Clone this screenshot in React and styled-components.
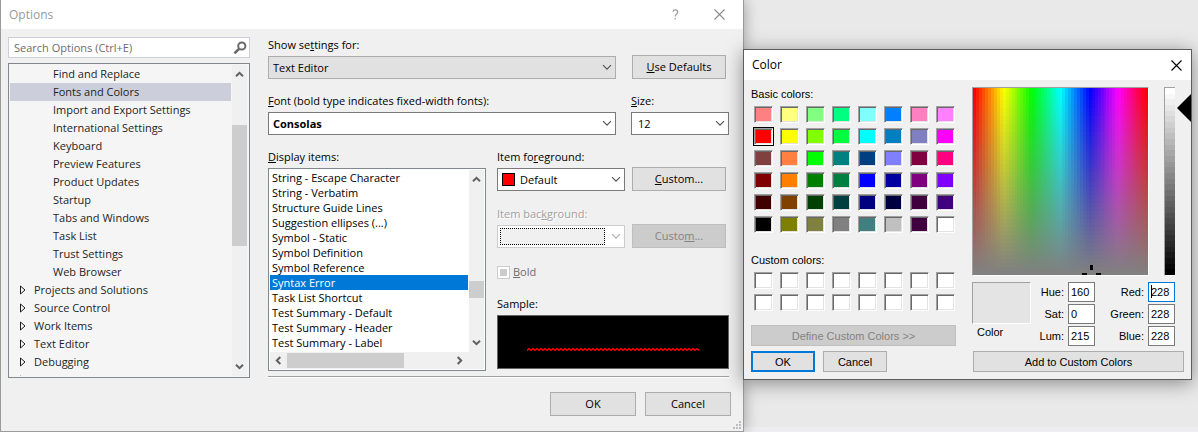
import React from "react";
import styled, { createGlobalStyle, css } from "styled-components";

const GlobalStyle = createGlobalStyle`
  *, *::before, *::after { box-sizing: border-box; }
  body { margin: 0; background: #e9e9e9; }
  button, input, select { font: inherit; color: inherit; margin: 0; }
  ul { list-style: none; margin: 0; padding: 0; }
`;

const UI_FONT = `"Open Sans", "Noto Sans", sans-serif`;
const CLASSIC_FONT = `"Liberation Sans", sans-serif`;

/* ---------- windows ---------- */

const Desktop = styled.div`
  min-height: 100vh;
  display: grid;
  grid-template-columns: 744fr 448fr;
  align-items: start;
  padding-right: 6px;
  background: linear-gradient(to top, #eeeef0 5px, #e9e9e9 5px);
  overflow: hidden;
`;

const OptionsWindow = styled.section`
  display: flex;
  flex-direction: column;
  min-height: 100vh;
  border: 1px solid #9b9b9b;
  border-top: 0;
  background: #f0f0f0;
  color: #000;
  font: 11px/16px ${UI_FONT};
  box-shadow: 0 0 14px rgba(0, 0, 0, 0.35);
`;

const ColorWindow = styled.section`
  z-index: 1;
  margin-top: 49px;
  margin-left: -1px;
  border: 1px solid #5c5c5c;
  background: #f0f0f0;
  color: #000;
  font: 11px/16px ${CLASSIC_FONT};
  box-shadow: 0 3px 18px rgba(0, 0, 0, 0.42);
`;

const TitleBar = styled.header`
  display: flex;
  align-items: center;
  height: ${(p) => (p.$active ? 30 : 29)}px;
  padding: 0 ${(p) => (p.$active ? 8 : 17)}px 0 8px;
  background: #fff;
  color: ${(p) => (p.$active ? "#000" : "#999")};
  font: 12px/16px ${UI_FONT};
`;

const Title = styled.h1`
  flex: 1;
  margin: 0;
  font: inherit;
`;

const CaptionButton = styled.button`
  display: grid;
  place-items: center;
  width: 13px;
  height: 26px;
  margin-left: 31px;
  padding: 0;
  border: 0;
  background: none;
`;

/* ---------- shared controls ---------- */

const PushButton = styled.button`
  height: ${(p) => (p.$small ? 21 : 24)}px;
  width: ${(p) => p.$width || "100%"};
  padding: 0;
  border: ${(p) => (p.$primary ? "2px solid #0078d7" : "1px solid #adadad")};
  background: #e1e1e1;
  line-height: 16px;
  &:disabled {
    border-color: #bfbfbf;
    background: #cccccc;
    color: #838383;
  }
`;

const Field = styled.div`
  display: flex;
  flex-direction: column;
  gap: 3px;
  flex: ${(p) => p.$flex || "1 1 0"};
  min-width: 0;
`;

const Label = styled.label`
  white-space: nowrap;
  ${(p) =>
    p.$disabled &&
    css`
      color: #a0a0a0;
      text-shadow: 1px 1px 0 #fff;
    `}
`;

const ComboBox = styled.div`
  display: grid;
  align-items: center;
  height: 23px;
  border: 1px solid ${(p) => (p.$disabled ? "#cccccc" : p.$flat ? "#adadad" : "#7a7a7a")};
  background: ${(p) => (p.$flat ? "#e1e1e1" : "#fff")};
  > * { grid-area: 1 / 1; }
  > svg {
    justify-self: end;
    margin-right: 3px;
    pointer-events: none;
  }
`;

const Select = styled.select`
  appearance: none;
  width: 100%;
  height: 21px;
  padding: 0 20px 0 ${(p) => p.$indent || 4}px;
  border: 0;
  background: none;
  font-weight: ${(p) => (p.$bold ? 700 : 400)};
  opacity: 1;
`;

const ColorChip = styled.span`
  width: 13px;
  height: 13px;
  margin-left: 4px;
  border: 1px solid #000;
  background: #f00;
  pointer-events: none;
`;

const FocusRect = styled.span`
  height: 17px;
  margin: 0 19px 0 2px;
  border: 1px dotted #000;
  background: #f0f0f0;
  pointer-events: none;
`;

/* ---------- scroll bars ---------- */

const ScrollBar = styled.div`
  display: flex;
  flex-direction: ${(p) => (p.$horizontal ? "row" : "column")};
  align-items: center;
  justify-content: space-between;
  background: #f0f0f0;
  ${(p) => (p.$horizontal ? "height: 17px; padding: 0 4px;" : "width: 15px; padding: 5px 0;")}
`;

const ScrollTrack = styled.div`
  flex: 1;
  display: flex;
  flex-direction: ${(p) => (p.$horizontal ? "row" : "column")};
  align-self: stretch;
  margin: ${(p) => (p.$horizontal ? "1px 4px" : "5px 0")};
`;

const ScrollThumb = styled.div`
  background: #cdcdcd;
  flex: ${(p) => p.$size} 0 0;
`;

const ScrollSpace = styled.div`
  flex: ${(p) => p.$size} 0 0;
`;

/* ---------- options: sidebar ---------- */

const OptionsBody = styled.div`
  display: flex;
  flex: 1 0 auto;
  gap: 18px;
  padding: 8px 14px 0 7px;
`;

const Sidebar = styled.aside`
  display: flex;
  flex-direction: column;
  flex: 242 1 0;
  gap: 5px;
  min-width: 0;
`;

const SearchBox = styled.div`
  display: flex;
  align-items: center;
  height: 21px;
  padding: 0 2px 0 5px;
  border: 1px solid #cccedb;
  background: #fff;
`;

const SearchInput = styled.input`
  flex: 1;
  min-width: 0;
  height: 19px;
  padding: 0;
  border: 0;
  outline: 0;
  background: none;
  &::placeholder { color: #6d6d6d; opacity: 1; }
`;

const TreePane = styled.div`
  display: flex;
  flex: 1 1 0;
  gap: 1px;
  min-height: 0;
  padding: 1px 2px 1px 1px;
  border: 1px solid #828790;
  background: #f5f5f5;
  overflow: hidden;
`;

const Tree = styled.ul`
  flex: 1;
  min-width: 0;
  overflow: hidden;
`;

const TreeItem = styled.li`
  display: flex;
  align-items: center;
  gap: 8px;
  height: 18px;
  padding-left: ${(p) => (p.$leaf ? 43 : 10)}px;
  background: ${(p) => (p.$selected ? "#cccedb" : "transparent")};
  color: #1e1e1e;
  white-space: nowrap;
`;

/* ---------- options: settings ---------- */

const Settings = styled.div`
  display: flex;
  flex-direction: column;
  flex: 461 1 0;
  gap: 14px;
  min-width: 0;
`;

const SettingsRow = styled.div`
  display: flex;
  align-items: ${(p) => (p.$stretch ? "stretch" : "flex-end")};
  gap: ${(p) => p.$gap}px;
`;

const ActionSlot = styled.div`
  flex: 0 0 98px;
  padding: 0 3px 0 1px;
`;

const ItemColumn = styled.div`
  display: flex;
  flex-direction: column;
  flex: 232 1 0;
  gap: 15px;
  min-width: 0;
`;

const ListBox = styled.div`
  display: grid;
  grid-template-columns: 1fr 15px;
  grid-template-rows: 182px 17px;
  column-gap: 1px;
  padding: 1px;
  border: 1px solid #828790;
  background: #fff;
  > :last-child { grid-column: 1 / -1; padding-right: 20px; }
`;

const ListItem = styled.li`
  height: 15px;
  padding-left: 2px;
  line-height: 15px;
  white-space: nowrap;
  background: ${(p) => (p.$selected ? "#0078d7" : "transparent")};
  color: ${(p) => (p.$selected ? "#fff" : "#000")};
`;

const CheckRow = styled.label`
  display: flex;
  align-items: center;
  gap: 3px;
  height: 18px;
  color: #6d6d6d;
`;

const CheckBox = styled.input`
  appearance: none;
  width: 13px;
  height: 13px;
  border: 1px solid #cccccc;
  background: #cccccc;
  box-shadow: inset 0 0 0 2px #fff;
`;

const SampleBox = styled.div`
  display: flex;
  justify-content: center;
  height: 54px;
  padding-top: 32px;
  border: 1px solid #646464;
  background: #000;
`;

const Divider = styled.hr`
  width: 100%;
  height: 2px;
  margin: -9px 0 0;
  border: 0;
  border-top: 1px solid #a0a0a0;
  background: #fff;
`;

const OptionsFooter = styled.footer`
  display: flex;
  justify-content: flex-end;
  gap: 9px;
  padding: 14px 12px 0 0;
`;

const ResizeGrip = styled.svg`
  align-self: flex-end;
  margin: 5px 2px 2px 0;
`;

/* ---------- color dialog ---------- */

const ColorBody = styled.div`
  display: flex;
  gap: 16px;
  padding: 0 0 7px 7px;
`;

const Palette = styled.div`
  flex: 0 0 205px;
  padding-top: 6px;
`;

const PaletteTitle = styled.h2`
  margin: 0;
  font: inherit;
`;

const SwatchGrid = styled.div`
  display: grid;
  grid-template-columns: repeat(8, 19px);
  gap: 5px 7px;
  margin: 4px 0 ${(p) => p.$after}px 3px;
`;

const Swatch = styled.button`
  height: 17px;
  padding: 0;
  border: 1px solid;
  border-color: #a0a0a0 #fff #fff #a0a0a0;
  outline: ${(p) => (p.$selected ? "1px solid #000" : "none")};
  background: ${(p) => p.$color};
  box-shadow: inset 1px 1px 0 #696969, inset -1px -1px 0 #e3e3e3;
`;

const PaletteActions = styled.div`
  display: flex;
  gap: 8px;
  margin-top: 5px;
`;

const Mixer = styled.div`
  flex: 1;
  min-width: 0;
  padding-top: 7px;
`;

const MixerTop = styled.div`
  display: flex;
  height: 189px;
`;

const Spectrum = styled.div`
  position: relative;
  flex: 1;
  margin-right: 15px;
  border: 1px solid;
  border-color: #a0a0a0 #fff #fff #a0a0a0;
  background: ${(p) => p.$layers};
  overflow: hidden;
`;

const CrossHair = styled.svg`
  position: absolute;
  left: 62%;
  bottom: 0;
`;

const LuminanceBar = styled.div`
  width: 11px;
  margin-right: 2px;
  border: 1px solid;
  border-color: #a0a0a0 transparent #fff #a0a0a0;
  border-right: 0;
  background: ${(p) => p.$layers};
`;

const LuminanceArrow = styled.svg`
  margin-top: 7px;
`;

const Readout = styled.div`
  display: grid;
  grid-template-columns: 59px 29fr 27px 45fr 27px;
  grid-template-rows: repeat(3, 20px);
  gap: 2px 4px;
  margin: 6px 16px 5px 0;
`;

const Preview = styled.div`
  grid-area: 1 / 1 / 3 / 2;
  border: 1px solid;
  border-color: #a0a0a0 #fff #fff #a0a0a0;
  background: #e4e4e4;
`;

const PreviewLabel = styled.span`
  grid-area: 3 / 1;
  padding-left: 5px;
  line-height: 12px;
`;

const ChannelLabel = styled.label`
  grid-area: ${(p) => p.$row} / ${(p) => p.$col};
  justify-self: end;
  line-height: 20px;
`;

const ChannelBox = styled.div`
  position: relative;
  grid-area: ${(p) => p.$row} / ${(p) => p.$col};
`;

const ChannelInput = styled.input`
  display: block;
  width: 100%;
  height: 20px;
  padding: 0 0 0 2px;
  border: 1px solid ${(p) => (p.$focused ? "#0078d7" : "#7a7a7a")};
  outline: 0;
  background: #fff;
`;

const Caret = styled.span`
  position: absolute;
  top: 3px;
  left: 3px;
  width: 1px;
  height: 13px;
  background: #000;
`;

const MixerAction = styled.div`
  padding: 0 7px 0 1px;
`;

/* ---------- data ---------- */

const TREE_LEAVES = [
  "Find and Replace", "Fonts and Colors", "Import and Export Settings",
  "International Settings", "Keyboard", "Preview Features", "Product Updates",
  "Startup", "Tabs and Windows", "Task List", "Trust Settings", "Web Browser",
];
const TREE_GROUPS = [
  "Projects and Solutions", "Source Control", "Work Items", "Text Editor",
  "Debugging", "Performance Tools",
];
const DISPLAY_ITEMS = [
  "String - Escape Character", "String - Verbatim", "Structure Guide Lines",
  "Suggestion ellipses (...)", "Symbol - Static", "Symbol Definition",
  "Symbol Reference", "Syntax Error", "Task List Shortcut",
  "Test Summary - Default", "Test Summary - Header", "Test Summary - Label",
];
const BASIC_COLORS = `
  ff8080 ffff80 80ff80 00ff80 80ffff 0080ff ff80c0 ff80ff
  ff0000 ffff00 80ff00 00ff40 00ffff 0080c0 8080c0 ff00ff
  804040 ff8040 00ff00 008080 004080 8080ff 800040 ff0080
  800000 ff8000 008000 008040 0000ff 0000a0 800080 8000ff
  400000 804000 004000 004040 000080 000040 400040 400080
  000000 808000 808040 808080 408080 c0c0c0 400040 ffffff
`.trim().split(/\s+/).map((c) => `#${c}`);

/* Hard-edged gradient made of equal bands. */
const bands = (direction, count, colorAt) =>
  `linear-gradient(${direction}, ${Array.from({ length: count }, (_, i) => {
    const from = ((i * 100) / count).toFixed(3);
    const to = (((i + 1) * 100) / count).toFixed(3);
    return `${colorAt(i / (count - 1))} ${from}% ${to}%`;
  }).join(", ")})`;

const SPECTRUM = [
  bands("to bottom", 47, (t) => `rgba(128,128,128,${t.toFixed(3)})`),
  bands("to right", 59, (t) => `hsl(${(t * 359).toFixed(1)} 100% 50%)`),
].join(", ");

const LUMINANCE = bands("to bottom", 33, (t) => {
  const v = Math.round(255 * (1 - t));
  return `rgb(${v},${v},${v})`;
});

/* ---------- drawings ---------- */

const Chevron = ({ color = "#555" }) => (
  <svg width="10" height="7" viewBox="0 0 10 7" fill="none" stroke={color} strokeWidth="1.2">
    <path d="M1 1.2 5 5.2 9 1.2" />
  </svg>
);

const ARROW_TURN = { up: 0, right: 90, down: 180, left: 270 };

const ScrollArrow = ({ dir }) => (
  <svg width="9" height="9" viewBox="0 0 9 9" fill="none" stroke="#606060" strokeWidth="2">
    <path d="M1 6.3 4.5 2.8 8 6.3" transform={`rotate(${ARROW_TURN[dir]} 4.5 4.5)`} />
  </svg>
);

const CloseGlyph = ({ color }) => (
  <svg width="11" height="11" viewBox="0 0 11 11" fill="none" stroke={color} strokeWidth="1.1">
    <path d="M.5 .5 10.5 10.5M10.5 .5 .5 10.5" />
  </svg>
);

const HelpGlyph = () => (
  <svg width="7" height="11" viewBox="0 0 7 11" fill="none" stroke="#999" strokeWidth="1.2">
    <path d="M1 2.7C1.3 .2 5.7 .1 5.7 2.9 5.7 5 3.2 5 3.2 7.5M3.2 9v1.5" />
  </svg>
);

const SearchGlyph = () => (
  <svg width="14" height="14" viewBox="0 0 14 14" fill="none" stroke="#6a6a6a">
    <circle cx="8.8" cy="5" r="3.6" strokeWidth="2" />
    <path d="M6.2 7.8 1.4 12.4" strokeWidth="2.6" />
  </svg>
);

const Expander = () => (
  <svg width="6" height="10" viewBox="0 0 6 10" fill="none" stroke="#1e1e1e">
    <path d="M.5 1v8L5 5Z" />
  </svg>
);

const squigglePath =
  "M0 2.5" + Array.from({ length: 86 }, (_, i) => `L${(i + 1) * 2} ${i % 2 ? 2.5 : 0.5}`).join("");

const GRIP_DOTS = [[6, 0], [3, 3], [6, 3], [0, 6], [3, 6], [6, 6]];

/* ---------- components ---------- */

function Scroller({ horizontal, before, size, after }) {
  return (
    <ScrollBar $horizontal={horizontal}>
      <ScrollArrow dir={horizontal ? "left" : "up"} />
      <ScrollTrack $horizontal={horizontal}>
        <ScrollSpace $size={before} />
        <ScrollThumb $size={size} />
        <ScrollSpace $size={after} />
      </ScrollTrack>
      <ScrollArrow dir={horizontal ? "right" : "down"} />
    </ScrollBar>
  );
}

function Combo({ id, value, flat, bold, disabled, indent, children }) {
  return (
    <ComboBox $flat={flat} $disabled={disabled}>
      <Select id={id} $bold={bold} $indent={indent} disabled={disabled} defaultValue={value}>
        <option>{value}</option>
      </Select>
      {children}
      <Chevron color={disabled ? "#b0b0b0" : "#555"} />
    </ComboBox>
  );
}

function OptionsDialog() {
  return (
    <OptionsWindow>
      <TitleBar>
        <Title>Options</Title>
        <CaptionButton><HelpGlyph /></CaptionButton>
        <CaptionButton><CloseGlyph color="#8a8a8a" /></CaptionButton>
      </TitleBar>
      <OptionsBody>
        <Sidebar>
          <SearchBox>
            <SearchInput type="text" placeholder="Search Options (Ctrl+E)" />
            <SearchGlyph />
          </SearchBox>
          <TreePane>
            <Tree role="tree">
              {TREE_LEAVES.map((name) => (
                <TreeItem key={name} role="treeitem" $leaf $selected={name === "Fonts and Colors"}>
                  {name}
                </TreeItem>
              ))}
              {TREE_GROUPS.map((name) => (
                <TreeItem key={name} role="treeitem"><Expander />{name}</TreeItem>
              ))}
            </Tree>
            <Scroller before={41} size={121} after={111} />
          </TreePane>
        </Sidebar>
        <Settings>
          <SettingsRow $gap={15}>
            <Field>
              <Label htmlFor="category">Show se<u>t</u>tings for:</Label>
              <Combo id="category" value="Text Editor" flat />
            </Field>
            <ActionSlot><PushButton><u>U</u>se Defaults</PushButton></ActionSlot>
          </SettingsRow>
          <SettingsRow $gap={15}>
            <Field>
              <Label htmlFor="font"><u>F</u>ont (bold type indicates fixed-width fonts):</Label>
              <Combo id="font" value="Consolas" bold />
            </Field>
            <Field $flex="0 0 98px">
              <Label htmlFor="size"><u>S</u>ize:</Label>
              <Combo id="size" value="12" indent={6} />
            </Field>
          </SettingsRow>
          <SettingsRow $gap={11} $stretch>
            <Field $flex="218 1 0">
              <Label as="span"><u>D</u>isplay items:</Label>
              <ListBox>
                <ul role="listbox">
                  {DISPLAY_ITEMS.map((name) => (
                    <ListItem key={name} role="option" $selected={name === "Syntax Error"}>{name}</ListItem>
                  ))}
                </ul>
                <Scroller before={92} size={17} after={35} />
                <Scroller horizontal before={0} size={118} after={48} />
              </ListBox>
            </Field>
            <ItemColumn>
              <SettingsRow $gap={6}>
                <Field>
                  <Label htmlFor="foreground">Item fo<u>r</u>eground:</Label>
                  <Combo id="foreground" value="Default" indent={22}><ColorChip /></Combo>
                </Field>
                <ActionSlot><PushButton><u>C</u>ustom...</PushButton></ActionSlot>
              </SettingsRow>
              <SettingsRow $gap={6}>
                <Field>
                  <Label htmlFor="background" $disabled>Item bac<u>k</u>ground:</Label>
                  <Combo id="background" value="" disabled><FocusRect /></Combo>
                </Field>
                <ActionSlot><PushButton disabled>Custo<u>m</u>...</PushButton></ActionSlot>
              </SettingsRow>
              <CheckRow>
                <CheckBox type="checkbox" disabled />
                <span><u>B</u>old</span>
              </CheckRow>
              <Field $flex="none">
                <Label as="span">Sample:</Label>
                <SampleBox>
                  <svg width="172" height="3" viewBox="0 0 172 3" fill="none" stroke="#f00" strokeWidth="1.4">
                    <path d={squigglePath} />
                  </svg>
                </SampleBox>
              </Field>
            </ItemColumn>
          </SettingsRow>
          <Divider />
        </Settings>
      </OptionsBody>
      <OptionsFooter>
        <PushButton $width="86px">OK</PushButton>
        <PushButton $width="86px">Cancel</PushButton>
      </OptionsFooter>
      <ResizeGrip width="8" height="8" viewBox="0 0 8 8" fill="#bdbdbd">
        {GRIP_DOTS.map(([x, y]) => <rect key={`${x}-${y}`} x={x} y={y} width="2" height="2" />)}
      </ResizeGrip>
    </OptionsWindow>
  );
}

const CHANNELS = [
  { name: "Hue", value: 160, row: 1, col: 2 },
  { name: "Sat", value: 0, row: 2, col: 2 },
  { name: "Lum", value: 215, row: 3, col: 2 },
  { name: "Red", value: 228, row: 1, col: 4, focused: true },
  { name: "Green", value: 228, row: 2, col: 4 },
  { name: "Blue", value: 228, row: 3, col: 4 },
];

function ColorDialog() {
  return (
    <ColorWindow>
      <TitleBar $active>
        <Title>Color</Title>
        <CaptionButton><CloseGlyph color="#000" /></CaptionButton>
      </TitleBar>
      <ColorBody>
        <Palette>
          <PaletteTitle>Basic colors:</PaletteTitle>
          <SwatchGrid $after={19}>
            {BASIC_COLORS.map((color, i) => (
              <Swatch key={i} $color={color} $selected={color === "#ff0000"} />
            ))}
          </SwatchGrid>
          <PaletteTitle>Custom colors:</PaletteTitle>
          <SwatchGrid $after={14}>
            {Array.from({ length: 16 }, (_, i) => <Swatch key={i} $color="#fff" />)}
          </SwatchGrid>
          <PushButton $small disabled>Define Custom Colors &gt;&gt;</PushButton>
          <PaletteActions>
            <PushButton $small $primary $width="64px">OK</PushButton>
            <PushButton $small $width="64px">Cancel</PushButton>
          </PaletteActions>
        </Palette>
        <Mixer>
          <MixerTop>
            <Spectrum $layers={SPECTRUM}>
              <CrossHair width="19" height="10" viewBox="0 0 19 10">
                <path d="M8 0h3v5h-3zM0 8h5v2h-5zM14 8h5v2h-5z" />
              </CrossHair>
            </Spectrum>
            <LuminanceBar $layers={LUMINANCE} />
            <LuminanceArrow width="14" height="28" viewBox="0 0 14 28">
              <path d="M0 14 14 0V28Z" />
            </LuminanceArrow>
          </MixerTop>
          <Readout>
            <Preview />
            <PreviewLabel>Color</PreviewLabel>
            {CHANNELS.map(({ name, value, row, col, focused }) => (
              <React.Fragment key={name}>
                <ChannelLabel htmlFor={name} $row={row} $col={col}>{name}:</ChannelLabel>
                <ChannelBox $row={row} $col={col + 1}>
                  <ChannelInput id={name} type="text" defaultValue={value} $focused={focused} />
                  {focused && <Caret />}
                </ChannelBox>
              </React.Fragment>
            ))}
          </Readout>
          <MixerAction><PushButton $small>Add to Custom Colors</PushButton></MixerAction>
        </Mixer>
      </ColorBody>
    </ColorWindow>
  );
}

export default function App() {
  return (
    <>
      <GlobalStyle />
      <Desktop>
        <OptionsDialog />
        <ColorDialog />
      </Desktop>
    </>
  );
}
